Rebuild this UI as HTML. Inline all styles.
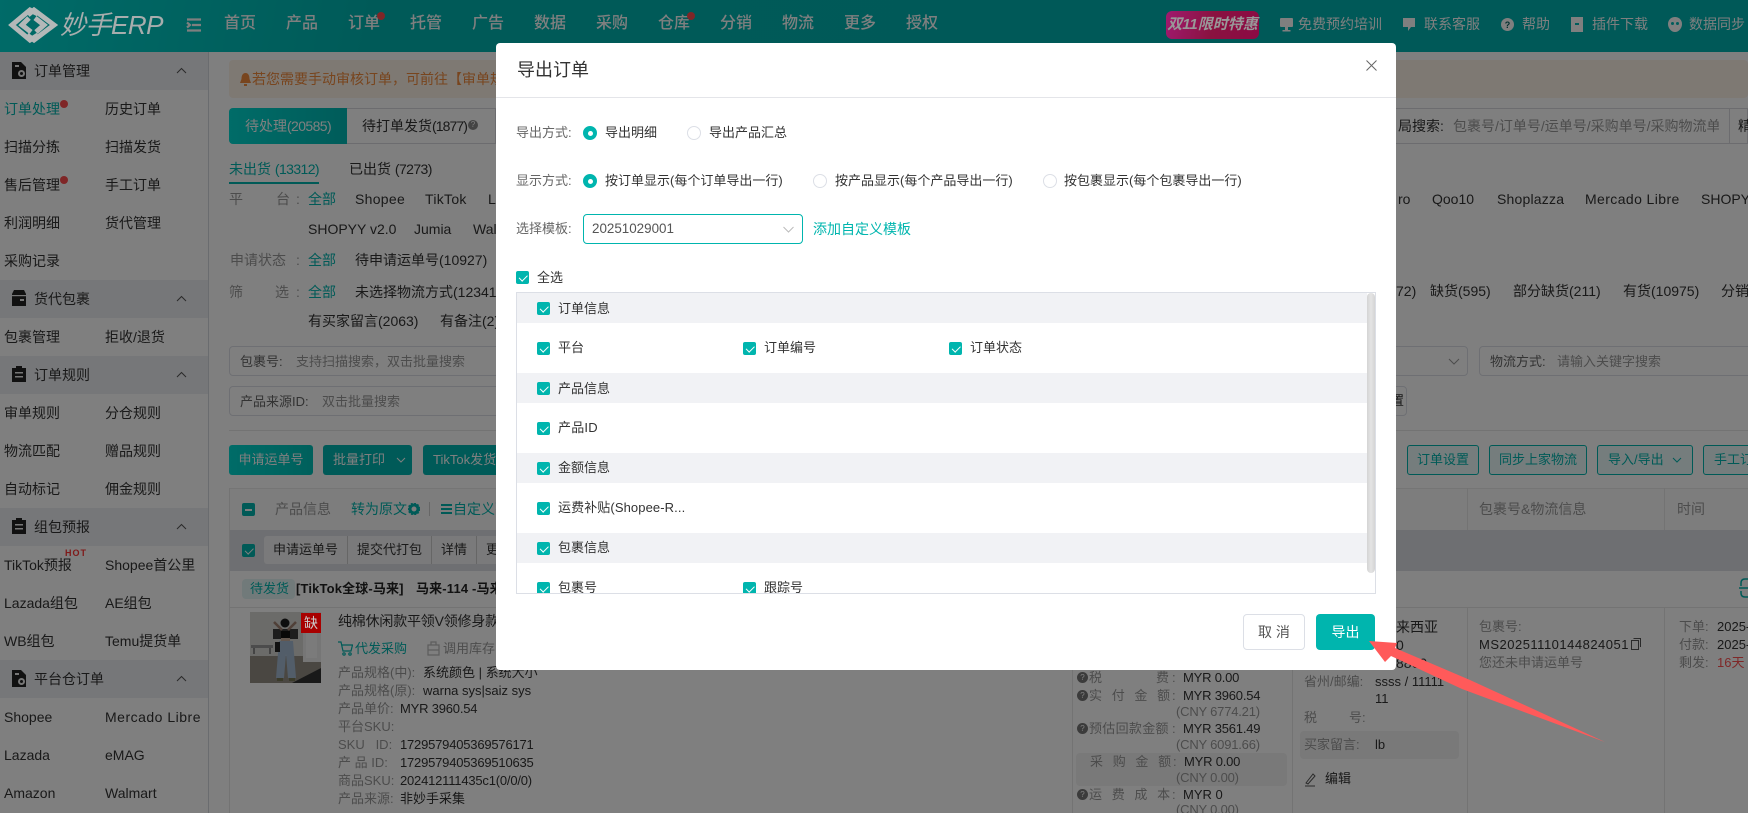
<!DOCTYPE html>
<html lang="zh-CN">
<head>
<meta charset="utf-8">
<title>导出订单</title>
<style>
*{box-sizing:border-box}
html,body{margin:0;padding:0;width:1748px;height:813px;overflow:hidden;background:#fff}
body{position:relative;font-family:"Liberation Sans","Noto Sans CJK SC",sans-serif;font-size:14px;color:#333}
.t{position:absolute;white-space:nowrap;line-height:20px}
.b{position:absolute}
.g{color:#999}.c{color:#00b5ae}.s{font-size:13px}
.n{letter-spacing:-.6px}
.hd{position:absolute;left:0;width:208px;height:38px;background:#eceef2}
.nav{position:absolute;top:14px;line-height:20px;font-size:16px;font-weight:500;color:#fff;white-space:nowrap}
.rn{position:absolute;top:14px;line-height:20px;font-size:14px;color:#fff;white-space:nowrap}
.dot{position:absolute;width:8px;height:8px;border-radius:50%;background:#ff4d4f}
.box{position:absolute;border:1px solid #dcdfe6;border-radius:4px;background:#fff}
.btn{position:absolute;top:445px;height:30px;border-radius:3px;background:#00b4b0;color:#fff;text-align:center;line-height:30px;font-size:13px;white-space:nowrap}
.btn2{position:absolute;top:445px;height:30px;border-radius:3px;background:#eafafa;border:1px solid #00b5ae;color:#00b5ae;text-align:center;line-height:28px;font-size:13px;white-space:nowrap;overflow:hidden}
.cb{position:absolute;width:13px;height:13px;border-radius:2px;background:#00b5ae}
.cb:after{content:"";position:absolute;left:4.5px;top:2px;width:3.5px;height:6.5px;border:solid #fff;border-width:0 1.3px 1.3px 0;transform:rotate(45deg)}
.r{position:absolute;width:14px;height:14px;border-radius:50%;border:1px solid #dcdfe6;background:#fff}
.r.on{background:#00b5ae;border-color:#00b5ae}
.r.on:after{content:"";position:absolute;left:3.5px;top:3.5px;width:5px;height:5px;border-radius:50%;background:#fff}
.rw{position:absolute;left:0;width:850px;height:30px;background:#f1f2f5}
.vl{position:absolute;width:1px;background:#e6e6e6}
.hl{position:absolute;height:1px;background:#e6e6e6}
.q{position:absolute;left:1077px;width:11px;height:11px;border-radius:50%;background:#777;color:#fff;font-size:8px;line-height:11px;text-align:center}
.l9{letter-spacing:9.7px}
#ov{position:absolute;left:0;top:0;width:1748px;height:813px;background:rgba(0,0,0,.5)}
</style>
</head>
<body>

<!-- header -->
<div class="b" style="left:0;top:0;width:1748px;height:52px;background:linear-gradient(100deg,#00d6d0 0,#00b4b0 22%,#00b2b0 100%)"></div>
<svg class="b" style="left:186px;top:18px" width="16" height="14" viewBox="0 0 16 14" fill="none" stroke="#fff" stroke-width="2.200"><path d="M1 1.500H15M6 7H15M1 12.500H15M1 4.500L4 7L1 9.500"/></svg>
<div class="nav" style="left:224px">首页</div><div class="nav" style="left:286px">产品</div><div class="nav" style="left:348px">订单</div><div class="nav" style="left:410px">托管</div><div class="nav" style="left:472px">广告</div><div class="nav" style="left:534px">数据</div><div class="nav" style="left:596px">采购</div><div class="nav" style="left:658px">仓库</div><div class="nav" style="left:720px">分销</div><div class="nav" style="left:782px">物流</div><div class="nav" style="left:844px">更多</div><div class="nav" style="left:906px">授权</div>
<div class="dot" style="left:377px;top:12px"></div><div class="dot" style="left:687px;top:12px"></div>
<svg class="b" style="left:1280px;top:17px" width="13" height="15" viewBox="0 0 13 15" fill="#fff"><rect x="0" y="1" width="13" height="9" rx="1"/><rect x="5" y="10" width="3" height="3"/><rect x="2.5" y="13" width="8" height="1.5"/></svg>
<div class="rn" style="left:1298px">免费预约培训</div>
<svg class="b" style="left:1402px;top:17px" width="14" height="15" viewBox="0 0 14 15" fill="#fff"><path d="M1 1H13V10L9 10L6 14V10H1Z"/></svg>
<div class="rn" style="left:1424px">联系客服</div>
<svg class="b" style="left:1501px;top:18px" width="13" height="13" viewBox="0 0 13 13"><circle cx="6.5" cy="6.500" r="6.500" fill="#fff"/><text x="6.500" y="10" font-size="9" font-weight="700" text-anchor="middle" fill="#005c5c" font-family="Liberation Sans">?</text></svg>
<div class="rn" style="left:1522px">帮助</div>
<svg class="b" style="left:1571px;top:17px" width="12" height="15" viewBox="0 0 12 15" fill="#fff"><path d="M0 0H12V15H0Z"/><rect x="4" y="6" width="4" height="2" fill="#00b8b6"/></svg>
<div class="rn" style="left:1592px">插件下载</div>
<svg class="b" style="left:1668px;top:17px" width="14" height="15" viewBox="0 0 14 15"><path d="M7 0C11 0 14 3 14 7C14 11 11 15 7 15C3 15 0 11 0 7C0 3 3 0 7 0Z" fill="#fff"/><circle cx="4.500" cy="6.500" r="1.500" fill="#00b8b6"/><circle cx="9.500" cy="6.500" r="1.500" fill="#00b8b6"/></svg>
<div class="rn" style="left:1689px">数据同步</div>

<!-- sidebar -->
<div class="vl" style="left:208px;top:52px;height:761px;background:#d5d8de"></div>
<div class="hd" style="top:52px"></div><div class="hd" style="top:280px"></div><div class="hd" style="top:356px"></div><div class="hd" style="top:508px"></div><div class="hd" style="top:660px"></div>

<svg class="b" style="left:12px;top:62px" width="14" height="17" viewBox="0 0 14 17"><path d="M0 0H9L14 5V17H0Z" fill="#222"/><circle cx="9.500" cy="11.500" r="3.500" fill="#eee"/><circle cx="9.500" cy="11.500" r="1.500" fill="#222"/><rect x="3" y="3" width="4" height="2" fill="#eee"/></svg>
<svg class="b" style="left:11px;top:290px" width="16" height="16" viewBox="0 0 16 16"><path d="M1 4L3 0H13L15 4V16H1Z" fill="#222"/><rect x="1" y="5" width="14" height="1.200" fill="#eee"/><rect x="9" y="9" width="4" height="2" fill="#eee"/></svg>
<svg class="b" style="left:12px;top:366px" width="14" height="16" viewBox="0 0 14 16"><path d="M0 2H4V0H10V2H14V16H0Z" fill="#222"/><rect x="3" y="6" width="8" height="1.500" fill="#eee"/><rect x="3" y="10" width="8" height="1.500" fill="#eee"/></svg>
<svg class="b" style="left:12px;top:518px" width="14" height="16" viewBox="0 0 14 16"><path d="M0 2H4V0H10V2H14V16H0Z" fill="#222"/><rect x="3" y="6" width="8" height="1.500" fill="#eee"/><rect x="3" y="10" width="8" height="1.500" fill="#eee"/></svg>
<svg class="b" style="left:12px;top:670px" width="14" height="17" viewBox="0 0 14 17"><path d="M0 0H9L14 5V17H0Z" fill="#222"/><circle cx="9.500" cy="11.500" r="3.500" fill="#eee"/><circle cx="9.500" cy="11.500" r="1.500" fill="#222"/><rect x="3" y="3" width="4" height="2" fill="#eee"/></svg>

<div class="t" style="left:34px;top:61px">订单管理</div><div class="t" style="left:34px;top:289px">货代包裹</div><div class="t" style="left:34px;top:365px">订单规则</div><div class="t" style="left:34px;top:517px">组包预报</div><div class="t" style="left:34px;top:669px">平台仓订单</div>
<svg class="b" style="left:176px;top:67px" width="11" height="7" viewBox="0 0 11 7" fill="none" stroke="#555"><path d="M1 6L5.500 1.500L10 6"/></svg>
<svg class="b" style="left:176px;top:295px" width="11" height="7" viewBox="0 0 11 7" fill="none" stroke="#555"><path d="M1 6L5.500 1.500L10 6"/></svg>
<svg class="b" style="left:176px;top:371px" width="11" height="7" viewBox="0 0 11 7" fill="none" stroke="#555"><path d="M1 6L5.500 1.500L10 6"/></svg>
<svg class="b" style="left:176px;top:523px" width="11" height="7" viewBox="0 0 11 7" fill="none" stroke="#555"><path d="M1 6L5.500 1.500L10 6"/></svg>
<svg class="b" style="left:176px;top:675px" width="11" height="7" viewBox="0 0 11 7" fill="none" stroke="#555"><path d="M1 6L5.500 1.500L10 6"/></svg>

<div class="t c" style="left:4px;top:99px">订单处理</div><div class="t" style="left:105px;top:99px">历史订单</div>
<div class="dot" style="left:60px;top:100px"></div><div class="dot" style="left:60px;top:176px"></div>
<div class="t" style="left:4px;top:137px">扫描分拣</div><div class="t" style="left:105px;top:137px">扫描发货</div>
<div class="t" style="left:4px;top:175px">售后管理</div><div class="t" style="left:105px;top:175px">手工订单</div>
<div class="t" style="left:4px;top:213px">利润明细</div><div class="t" style="left:105px;top:213px">货代管理</div>
<div class="t" style="left:4px;top:251px">采购记录</div>
<div class="t" style="left:4px;top:327px">包裹管理</div><div class="t" style="left:105px;top:327px">拒收/退货</div>
<div class="t" style="left:4px;top:403px">审单规则</div><div class="t" style="left:105px;top:403px">分仓规则</div>
<div class="t" style="left:4px;top:441px">物流匹配</div><div class="t" style="left:105px;top:441px">赠品规则</div>
<div class="t" style="left:4px;top:479px">自动标记</div><div class="t" style="left:105px;top:479px">佣金规则</div>
<div class="t" style="left:4px;top:555px">TikTok预报</div><div class="t" style="left:105px;top:555px">Shopee首公里</div>
<div class="t" style="left:65px;top:546px;font-size:9px;font-weight:700;color:#f33;letter-spacing:1px;line-height:14px">HOT</div>
<div class="t" style="left:4px;top:593px">Lazada组包</div><div class="t" style="left:105px;top:593px">AE组包</div>
<div class="t" style="left:4px;top:631px">WB组包</div><div class="t" style="left:105px;top:631px">Temu提货单</div>
<div class="t" style="left:4px;top:707px">Shopee</div><div class="t" style="left:105px;top:707px;letter-spacing:.5px">Mercado Libre</div>
<div class="t" style="left:4px;top:745px">Lazada</div><div class="t" style="left:105px;top:745px">eMAG</div>
<div class="t" style="left:4px;top:783px">Amazon</div><div class="t" style="left:105px;top:783px">Walmart</div>

<!-- main -->
<div class="b" style="left:229px;top:60px;width:1519px;height:38px;border-radius:4px;background:#fdf2e6"></div>
<svg class="b" style="left:240px;top:73px" width="11" height="13" viewBox="0 0 11 13" fill="#f08a3c"><path d="M5.500 0C8.500 0 9.500 3 9.500 6L11 10H0L1.500 6C1.500 3 2.500 0 5.500 0Z"/><rect x="4" y="11" width="3" height="2"/></svg>
<div class="t" style="left:252px;top:69px;color:#f08a3c">若您需要手动审核订单，可前往【审单规则</div>

<div class="b" style="left:229px;top:108px;width:1519px;height:36px;border:1px solid #d9d9de;border-radius:4px 0 0 4px"></div>
<div class="b" style="left:229px;top:108px;width:118px;height:36px;background:linear-gradient(90deg,#00d8d0,#00b8b4);border-radius:4px 0 0 4px;color:#fff;text-align:center;line-height:36px">待处理<span class="n">(20585)</span></div>
<div class="t" style="left:362px;top:116px">待打单发货<span style="letter-spacing:-.9px">(1877)</span></div>
<div class="b" style="left:468px;top:120px;width:10px;height:10px;border-radius:50%;background:#888;color:#fff;font-size:8px;line-height:10px;text-align:center">?</div>
<div class="vl" style="left:495px;top:108px;height:36px;background:#d9d9de"></div>
<div class="t" style="left:1398px;top:116px">局搜索:</div><div class="t g" style="left:1453px;top:116px;width:266px;overflow:hidden">包裹号/订单号/运单号/采购单号/采购物流单号</div>
<div class="vl" style="left:1729px;top:108px;height:36px;background:#d9d9de"></div><div class="t" style="left:1738px;top:116px">精</div>

<div class="t c" style="left:229px;top:159px">未出货 <span class="n">(13312)</span></div>
<div class="b" style="left:229px;top:182px;width:90px;height:2px;background:#00b5ae"></div>
<div class="t" style="left:349px;top:159px">已出货 <span class="n">(7273)</span></div>

<div class="t g" style="left:229px;top:189px">平</div><div class="t g" style="left:276px;top:189px">台</div><div class="t g" style="left:296px;top:189px">:</div><div class="t c" style="left:308px;top:189px">全部</div>
<div class="t" style="left:355px;top:189px;letter-spacing:.3px">Shopee</div><div class="t" style="left:425px;top:189px;letter-spacing:.3px">TikTok</div><div class="t" style="left:488px;top:189px">Lazada</div>
<div class="t" style="left:1398px;top:189px">ro</div><div class="t" style="left:1432px;top:189px">Qoo10</div><div class="t" style="left:1497px;top:189px;letter-spacing:.2px">Shoplazza</div><div class="t" style="left:1585px;top:189px;letter-spacing:.4px">Mercado Libre</div><div class="t" style="left:1701px;top:189px">SHOPYY</div>
<div class="t" style="left:308px;top:219px">SHOPYY v2.0</div><div class="t" style="left:414px;top:219px">Jumia</div><div class="t" style="left:473px;top:219px">Walmart</div>
<div class="t g" style="left:230px;top:250px">申请状态</div><div class="t g" style="left:296px;top:250px">:</div><div class="t c" style="left:308px;top:250px">全部</div><div class="t" style="left:355px;top:250px">待申请运单号(10927)</div>
<div class="t g" style="left:229px;top:282px">筛</div><div class="t g" style="left:275px;top:282px">选</div><div class="t g" style="left:296px;top:282px">:</div><div class="t c" style="left:308px;top:282px">全部</div><div class="t" style="left:355px;top:282px">未选择物流方式(12341)</div>
<div class="t" style="left:1396px;top:281px">72)</div><div class="t" style="left:1430px;top:281px">缺货(595)</div><div class="t" style="left:1513px;top:281px">部分缺货(211)</div><div class="t" style="left:1623px;top:281px">有货(10975)</div><div class="t" style="left:1721px;top:281px">分销</div>
<div class="t" style="left:308px;top:311px">有买家留言(2063)</div><div class="t" style="left:440px;top:311px">有备注(2)</div>

<div class="box" style="left:229px;top:346px;width:400px;height:30px"></div>
<div class="t s" style="left:240px;top:352px;color:#666">包裹号:</div><div class="t s g" style="left:296px;top:352px">支持扫描搜索，双击批量搜索</div>
<div class="box" style="left:229px;top:386px;width:400px;height:30px"></div>
<div class="t s" style="left:240px;top:392px;color:#666">产品来源ID:</div><div class="t s g" style="left:322px;top:392px">双击批量搜索</div>
<div class="box" style="left:1200px;top:346px;width:268px;height:30px"></div>
<svg class="b" style="left:1448px;top:358px" width="12" height="7" viewBox="0 0 12 7" fill="none" stroke="#999"><path d="M1 1L6 6L11 1"/></svg>
<div class="box" style="left:1479px;top:346px;width:300px;height:30px"></div>
<div class="t s" style="left:1490px;top:352px;color:#666">物流方式:</div><div class="t s g" style="left:1557px;top:352px">请输入关键字搜索</div>
<div class="box" style="left:1300px;top:386px;width:107px;height:30px"></div><div class="t s" style="left:1391px;top:391px">置</div>
<div class="hl" style="left:229px;top:430px;width:1519px"></div>

<div class="btn" style="left:229px;width:84px;background:linear-gradient(90deg,#00d8d0,#00c0b8)">申请运单号</div>
<div class="btn" style="left:323px;width:89px;text-align:left;padding-left:10px">批量打印</div>
<svg class="b" style="left:396px;top:457px" width="10" height="6" viewBox="0 0 10 6" fill="none" stroke="#fff"><path d="M1 1L5 5L9 1"/></svg>
<div class="btn" style="left:423px;width:90px;text-align:left;padding-left:10px">TikTok发货</div>
<div class="btn2" style="left:1300px;width:96px"></div>
<div class="btn2" style="left:1407px;width:72px">订单设置</div>
<div class="btn2" style="left:1489px;width:98px">同步上家物流</div>
<div class="btn2" style="left:1597px;width:96px;text-align:left;padding-left:10px">导入/导出</div>
<svg class="b" style="left:1672px;top:457px" width="10" height="6" viewBox="0 0 10 6" fill="none" stroke="#00b5ae"><path d="M1 1L5 5L9 1"/></svg>
<div class="btn2" style="left:1703px;width:70px;text-align:left;padding-left:10px">手工订单</div>

<!-- table -->
<div class="b" style="left:229px;top:488px;width:1519px;height:42px;background:#fafafa;border-top:1px solid #ebebeb"></div>
<div class="b" style="left:242px;top:503px;width:13px;height:13px;border-radius:2px;background:#00b5ae"></div>
<div class="b" style="left:245px;top:508.500px;width:7px;height:2px;background:#fff"></div>
<div class="t s g" style="left:275px;top:499px;font-size:14px">产品信息</div>
<div class="t c" style="left:351px;top:499px">转为原文</div>
<svg class="b" style="left:408px;top:503px" width="12" height="12" viewBox="0 0 12 12"><circle cx="6" cy="6" r="4" fill="none" stroke="#00b5ae" stroke-width="3"/><circle cx="6" cy="6" r="5.800" fill="none" stroke="#00b5ae" stroke-width="1.200" stroke-dasharray="2 1.400"/></svg>
<div class="vl" style="left:429px;top:502px;height:14px;background:#ccc"></div>
<svg class="b" style="left:441px;top:504px" width="11" height="10" viewBox="0 0 11 10" fill="#00b5ae"><rect width="11" height="2"/><rect y="4" width="11" height="2"/><rect y="8" width="11" height="2"/></svg>
<div class="t c" style="left:453px;top:499px">自定义列</div>
<div class="t g" style="left:1479px;top:499px">包裹号&amp;物流信息</div><div class="t g" style="left:1677px;top:499px">时间</div>
<div class="vl" style="left:1467px;top:488px;height:42px"></div><div class="vl" style="left:1664px;top:488px;height:42px"></div>

<div class="b" style="left:229px;top:530px;width:1519px;height:41px;background:#dddee4"></div>
<div class="cb" style="left:242px;top:544px"></div>
<div class="b" style="left:264px;top:536px;width:240px;height:28px;background:#f4f4f6;border-radius:3px"></div>
<div class="t s" style="left:273px;top:540px">申请运单号</div><div class="vl" style="left:347px;top:536px;height:28px;background:#ccc"></div>
<div class="t s" style="left:357px;top:540px">提交代打包</div><div class="vl" style="left:431px;top:536px;height:28px;background:#ccc"></div>
<div class="t s" style="left:441px;top:540px">详情</div><div class="vl" style="left:476px;top:536px;height:28px;background:#ccc"></div>
<div class="t s" style="left:486px;top:540px">更多</div>

<div class="b" style="left:242px;top:579px;width:53px;height:20px;background:#e3f5f4;border-radius:4px"></div>
<div class="t c s" style="left:250px;top:579px">待发货</div>
<div class="t s" style="left:296px;top:579px;font-weight:700;color:#222;letter-spacing:.15px">[TikTok全球-马来]</div>
<div class="t s" style="left:416px;top:579px;font-weight:700;color:#222;letter-spacing:.15px">马来-114 -马来</div>
<svg class="b" style="left:1739px;top:578px" width="12" height="20" viewBox="0 0 12 20" fill="none" stroke="#00b5ae" stroke-width="1.500"><path d="M9 1H6Q2 1 2 5V8M2 13V15Q2 19 6 19H9"/><path d="M0 10H12"/></svg>
<div class="hl" style="left:229px;top:607px;width:1519px"></div>
<div class="vl" style="left:229px;top:488px;height:325px"></div>
<div class="vl" style="left:1072px;top:607px;height:206px"></div><div class="vl" style="left:1292px;top:607px;height:206px"></div><div class="vl" style="left:1467px;top:607px;height:206px"></div><div class="vl" style="left:1664px;top:607px;height:206px"></div>

<svg class="b" style="left:250px;top:612px" width="71" height="71" viewBox="0 0 71 71">
<rect width="71" height="71" fill="#d6d6d2"/><rect y="44" width="71" height="27" fill="#948f85"/><rect x="53" width="18" height="50" fill="#eceded"/><rect x="56" y="6" width="11" height="40" fill="#f6f6f6"/>
<rect x="1" y="33" width="22" height="3" fill="#999"/><rect x="3" y="36" width="2" height="6" fill="#888"/><rect x="19" y="36" width="2" height="6" fill="#888"/><path d="M42 71L71 56V71Z" fill="#333"/>
<rect x="23" y="17" width="25" height="10" fill="#3a3a3a"/><path d="M24 10L32 18M46 10L38 18" stroke="#a08070" stroke-width="2.500"/>
<circle cx="35" cy="11" r="4.500" fill="#1c1c1c"/><rect x="31" y="19" width="9" height="8" fill="#111"/><rect x="31" y="26" width="9" height="3" fill="#c8b0a0"/>
<path d="M29 29H43L46 66H38L36 42L34 66H26Z" fill="#a4bbd2"/><rect x="25" y="30" width="5" height="10" fill="#222"/>
<rect x="27" y="66" width="6" height="3" fill="#775"/><rect x="39" y="66" width="6" height="3" fill="#775"/>
</svg>

<div class="t" style="left:338px;top:611px;letter-spacing:-.2px">纯棉休闲款平领V领修身款</div>
<svg class="b" style="left:338px;top:641px" width="15" height="15" viewBox="0 0 15 15" fill="none" stroke="#00b5ae" stroke-width="1.200"><path d="M0 1H3L5 10H13L14.500 4H4"/><circle cx="6" cy="13" r="1.200"/><circle cx="12" cy="13" r="1.200"/></svg>
<div class="t c s" style="left:355px;top:639px">代发采购</div>
<svg class="b" style="left:427px;top:641px" width="13" height="15" viewBox="0 0 13 15" fill="none" stroke="#bbb" stroke-width="1.200"><path d="M1 4H12V14H1ZM4 4V1H9V4M1 9H12"/></svg>
<div class="t g s" style="left:443px;top:639px">调用库存</div>
<div class="t s g" style="left:338px;top:663px">产品规格(中):</div><div class="t s" style="left:423px;top:663px">系统颜色 | 系统大小</div>
<div class="t s g" style="left:338px;top:681px">产品规格(原):</div><div class="t s" style="left:423px;top:681px">warna sys|saiz sys</div>
<div class="t s g" style="left:338px;top:699px">产品单价:</div><div class="t s" style="left:400px;top:699px;letter-spacing:-.2px">MYR 3960.54</div>
<div class="t s g" style="left:338px;top:717px">平台SKU:</div>
<div class="t s g" style="left:338px;top:735px">SKU &nbsp; ID:</div><div class="t s" style="left:400px;top:735px;letter-spacing:-.2px">1729579405369576171</div>
<div class="t s g" style="left:338px;top:753px">产 品 ID:</div><div class="t s" style="left:400px;top:753px;letter-spacing:-.2px">1729579405369510635</div>
<div class="t s g" style="left:338px;top:771px">商品SKU:</div><div class="t s" style="left:400px;top:771px;letter-spacing:-.2px">202412111435c1(0/0/0)</div>
<div class="t s g" style="left:338px;top:789px">产品来源:</div><div class="t s" style="left:400px;top:789px">非妙手采集</div>

<div class="q" style="top:672px">?</div>
<div class="t s g" style="left:1089px;top:668px">税</div><div class="t s g" style="left:1156px;top:668px">费</div><div class="t s g" style="left:1172px;top:668px">:</div><div class="t s" style="left:1183px;top:668px;letter-spacing:-.2px">MYR 0.00</div>
<div class="q" style="top:690px">?</div>
<div class="t s g l9" style="left:1089px;top:686px">实付金额</div><div class="t s g" style="left:1172px;top:686px">:</div><div class="t s" style="left:1183px;top:686px;letter-spacing:-.2px">MYR 3960.54</div>
<div class="t s g" style="left:1176px;top:702px;letter-spacing:-.2px">(CNY 6774.21)</div>
<div class="q" style="top:723px">?</div>
<div class="t s g" style="left:1089px;top:719px;letter-spacing:.3px">预估回款金额</div><div class="t s g" style="left:1172px;top:719px">:</div><div class="t s" style="left:1183px;top:719px;letter-spacing:-.2px">MYR 3561.49</div>
<div class="t s g" style="left:1176px;top:735px;letter-spacing:-.2px">(CNY 6091.66)</div>
<div class="b" style="left:1076px;top:753px;width:211px;height:33px;background:#f2f2f2;border-radius:4px"></div>
<div class="t s g l9" style="left:1090px;top:752px">采购金额</div><div class="t s g" style="left:1173px;top:752px">:</div><div class="t s" style="left:1184px;top:752px;letter-spacing:-.2px">MYR 0.00</div>
<div class="t s g" style="left:1176px;top:768px;letter-spacing:-.2px">(CNY 0.00)</div>
<div class="q" style="top:789px">?</div>
<div class="t s g l9" style="left:1089px;top:785px">运费成本</div><div class="t s g" style="left:1172px;top:785px">:</div><div class="t s" style="left:1183px;top:785px">MYR 0</div>
<div class="t s g" style="left:1176px;top:800px;letter-spacing:-.2px">(CNY 0.00)</div>

<div class="t" style="left:1396px;top:617px">来西亚</div><div class="t" style="left:1396px;top:635px">0</div><div class="t" style="left:1396px;top:653px">8860</div>
<div class="t s g" style="left:1304px;top:672px">省州/邮编:</div><div class="t s" style="left:1375px;top:672px">ssss / 11111</div><div class="t s" style="left:1375px;top:689px">11</div>
<div class="t s g" style="left:1304px;top:708px">税</div><div class="t s g" style="left:1349px;top:708px">号:</div>
<div class="b" style="left:1300px;top:731px;width:159px;height:28px;background:#f2f2f2;border-radius:4px"></div>
<div class="t s g" style="left:1304px;top:735px">买家留言:</div><div class="t s" style="left:1375px;top:735px">lb</div>
<svg class="b" style="left:1304px;top:773px" width="13" height="14" viewBox="0 0 13 14" fill="none" stroke="#555"><path d="M2 10L9 1L11 3L4 11ZM1 13H11"/></svg>
<div class="t s" style="left:1325px;top:769px">编辑</div>

<div class="t s g" style="left:1479px;top:617px">包裹号:</div>
<div class="t s" style="left:1479px;top:635px;letter-spacing:.5px">MS20251110144824051</div>
<svg class="b" style="left:1631px;top:638px" width="10" height="12" viewBox="0 0 10 12" fill="none" stroke="#555"><rect x="0.500" y="2.500" width="7" height="9"/><path d="M2.500 0.500H9.500V9"/></svg>
<div class="t s g" style="left:1479px;top:653px">您还未申请运单号</div>
<div class="t s g" style="left:1679px;top:617px">下单:</div><div class="t s" style="left:1717px;top:617px">2025-11-10</div>
<div class="t s g" style="left:1679px;top:635px">付款:</div><div class="t s" style="left:1717px;top:635px">2025-11-10</div>
<div class="t s g" style="left:1679px;top:653px">剩发:</div><div class="t s" style="left:1717px;top:653px;color:#ff5050">16天</div>

<!-- overlay -->
<div id="ov"></div>

<!-- elements with fixed dim colours -->
<svg class="b" style="left:8px;top:7px" width="50" height="37" viewBox="8 7 50 37" fill="none" stroke="#b4b8b8" stroke-width="5" stroke-linejoin="miter">
<path d="M38 14L30 10L12 25L30 40L38 35"/><path d="M28 15L34 10L54 25L34 40L27 35"/><path d="M29 18L22 25L31 32"/><path d="M35 18L44 25L36 32"/></svg>
<div class="t" style="left:60px;top:10px;font-size:26px;line-height:30px;font-style:italic;color:#a8adad;letter-spacing:-.5px">妙手ERP</div>
<div class="b" style="left:1166px;top:11px;width:93px;height:28px;border-radius:6px;background:linear-gradient(100deg,#a01a6e 0,#8a1240 50%,#8c0a44 100%);color:#999;font-size:15px;font-style:italic;font-weight:700;line-height:28px;text-align:center;white-space:nowrap">双11限时特惠</div>
<div class="b" style="left:301px;top:613px;width:20px;height:20px;background:#a80000;color:#ccc;text-align:center;line-height:20px;font-size:14px">缺</div>

<!-- modal -->
<div class="b" style="left:496px;top:43px;width:900px;height:627px;background:#fff;border-radius:4px"></div>
<div class="t" style="left:517px;top:58px;font-size:18px;line-height:24px;color:#333">导出订单</div>
<svg class="b" style="left:1366px;top:60px" width="11" height="11" viewBox="0 0 11 11" fill="none" stroke="#666"><path d="M0.500 0.500L10.500 10.500M10.500 0.500L0.500 10.500"/></svg>
<div class="hl" style="left:496px;top:97px;width:900px;background:#e4e5e9"></div>

<div class="t s" style="left:516px;top:123px;color:#666">导出方式:</div>
<div class="r on" style="left:583px;top:126px"></div><div class="t s" style="left:605px;top:123px">导出明细</div>
<div class="r" style="left:687px;top:126px"></div><div class="t s" style="left:709px;top:123px">导出产品汇总</div>

<div class="t s" style="left:516px;top:171px;color:#666">显示方式:</div>
<div class="r on" style="left:583px;top:174px"></div><div class="t s" style="left:605px;top:171px">按订单显示(每个订单导出一行)</div>
<div class="r" style="left:813px;top:174px"></div><div class="t s" style="left:835px;top:171px">按产品显示(每个产品导出一行)</div>
<div class="r" style="left:1043px;top:174px"></div><div class="t s" style="left:1064px;top:171px">按包裹显示(每个包裹导出一行)</div>

<div class="t s" style="left:516px;top:219px;color:#666">选择模板:</div>
<div class="b" style="left:583px;top:214px;width:220px;height:30px;border:1px solid #00b5ae;border-radius:4px;background:#fff"></div>
<div class="t" style="left:592px;top:219px;font-size:13.400px;color:#555">20251029001</div>
<svg class="b" style="left:783px;top:226px" width="11" height="7" viewBox="0 0 11 7" fill="none" stroke="#bbb"><path d="M0.500 1L5.500 6L10.500 1"/></svg>
<div class="t c" style="left:813px;top:219px">添加自定义模板</div>

<div class="cb" style="left:516px;top:271px"></div><div class="t s" style="left:537px;top:268px">全选</div>

<div class="b" style="left:516px;top:292px;width:860px;height:302px;border:1px solid #dcdfe6"></div>
<div class="b" style="left:517px;top:293px;width:858px;height:300px;overflow:hidden">
<div class="rw" style="top:0"></div><div class="rw" style="top:80px"></div><div class="rw" style="top:160px"></div><div class="rw" style="top:240px"></div>
<div class="cb" style="left:20px;top:9px"></div><div class="t s" style="left:41px;top:6px">订单信息</div>
<div class="cb" style="left:20px;top:49px"></div><div class="t s" style="left:41px;top:45px">平台</div>
<div class="cb" style="left:226px;top:49px"></div><div class="t s" style="left:247px;top:45px">订单编号</div>
<div class="cb" style="left:432px;top:49px"></div><div class="t s" style="left:453px;top:45px">订单状态</div>
<div class="cb" style="left:20px;top:89px"></div><div class="t s" style="left:41px;top:86px">产品信息</div>
<div class="cb" style="left:20px;top:129px"></div><div class="t s" style="left:41px;top:125px;letter-spacing:.2px">产品ID</div>
<div class="cb" style="left:20px;top:169px"></div><div class="t s" style="left:41px;top:165px">金额信息</div>
<div class="cb" style="left:20px;top:209px"></div><div class="t s" style="left:41px;top:205px;letter-spacing:.1px">运费补贴(Shopee-R...</div>
<div class="cb" style="left:20px;top:249px"></div><div class="t s" style="left:41px;top:245px">包裹信息</div>
<div class="cb" style="left:20px;top:289px"></div><div class="t s" style="left:41px;top:285px">包裹号</div>
<div class="cb" style="left:226px;top:289px"></div><div class="t s" style="left:247px;top:285px">跟踪号</div>
<div class="b" style="left:850px;top:0;width:8px;height:280px;border-radius:4px;background:linear-gradient(90deg,#d4d4d4,#e4e4e4,#d4d4d4)"></div>
</div>

<div class="b" style="left:1243px;top:614px;width:62px;height:36px;border:1px solid #dcdfe6;border-radius:4px;background:#fff;text-align:center;line-height:34px;font-size:14px;color:#555">取 消</div>
<div class="b" style="left:1316px;top:614px;width:59px;height:36px;border-radius:4px;background:#00b5ae;color:#fff;text-align:center;line-height:36px;font-size:14px">导出</div>

<!-- annotation arrow -->
<svg class="b" style="left:0;top:0" width="1748" height="813"><polygon points="1369,641 1397,643 1395,648 1470,680 1605,742 1462,689 1391,656 1385,662" fill="#ff5a5a"/></svg>

</body>
</html>
